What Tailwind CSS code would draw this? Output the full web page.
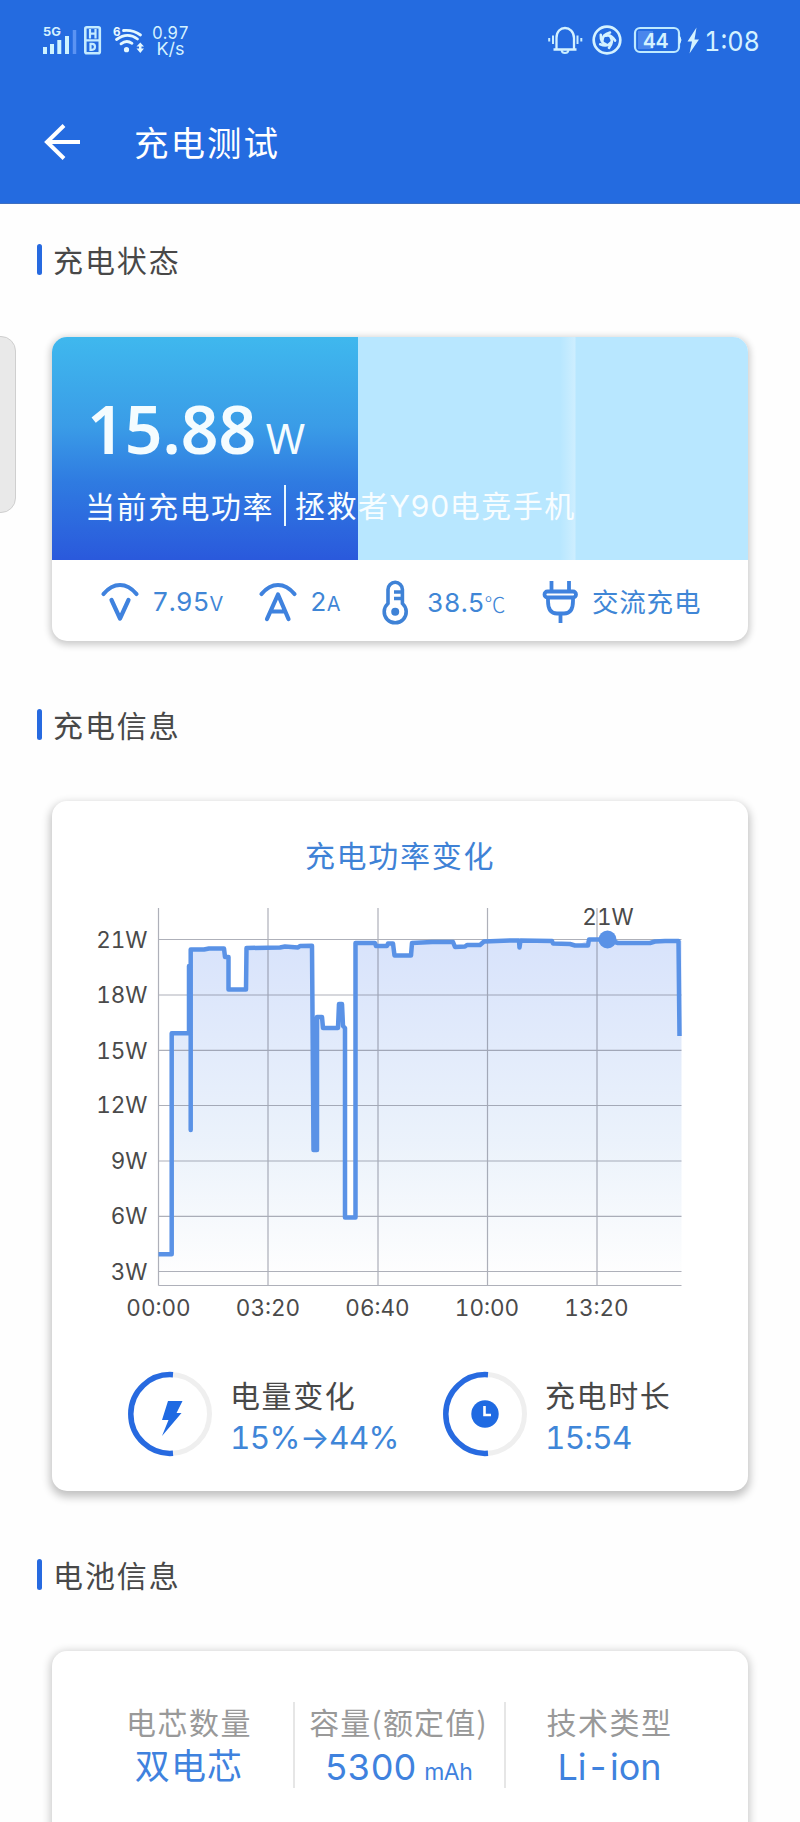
<!DOCTYPE html>
<html lang="zh-CN">
<head>
<meta charset="utf-8">
<title>充电测试</title>
<script src="https://cdn.jsdelivr.net/npm/@tailwindcss/browser@4"></script>
</head>
<body class="bg-white">
<div class="relative flex h-[1822px] w-[800px] flex-col overflow-hidden bg-[#fefefe] font-['Noto_Sans_CJK_SC',sans-serif] text-[#484848] tabular-nums">
  <header class="flex h-[204px] shrink-0 flex-col border-b border-[#3f6fc0] bg-[#246be0]">
    <!-- Status bar -->
    <div class="flex h-[80px] justify-between">
      <svg class="h-[80px] w-[240px]" viewBox="0 0 240 80" fill="none">
        <text x="43" y="36" font-family="Inter" font-weight="700" font-size="12" textLength="18" lengthAdjust="spacingAndGlyphs" fill="#d5f1ff">5G</text>
        <path d="M45 47V54M52 44V54M59.3 40V54M67 36V54" stroke="#cdf2ff" stroke-width="4"/>
        <path d="M74.5 30V54" stroke="#5b93f3" stroke-width="3.5"/>
        <rect x="85.3" y="27.3" width="14.5" height="26" rx="1.500" stroke="#c4ebff" stroke-width="2.600"/>
        <path d="M90 29V38.5M95.500 29V38.5M90 33.7H96M85 40.3H100" stroke="#c4ebff" stroke-width="2.200"/>
        <path d="M90.5 43.800V49.800H92Q95 49.800 95 46.8T92 43.800Z" stroke="#c4ebff" stroke-width="2.200"/>
        <text x="113" y="35.500" font-family="Inter" font-weight="700" font-size="12" textLength="7.500" lengthAdjust="spacingAndGlyphs" fill="#eafaff">6</text>
        <path d="M123.500 30.500Q133 29.500 140.500 35M116.500 39.500Q127.500 31.500 137.500 39M121 43.800Q126.500 39.500 132 43.300" stroke="#e4f8ff" stroke-width="2.8" stroke-linecap="round"/>
        <circle cx="126.5" cy="49.700" r="2.6" fill="#e4f8ff"/>
        <path d="M140.3 42.5L144 46.5H141.5V48.5H144L140.3 53L136.5 48.5H139V46.5H136.5Z" fill="#e4f8ff"/>
        <text x="152" y="38.500" font-family="Inter" font-size="17.500" textLength="37" lengthAdjust="spacingAndGlyphs" fill="#d5f2ff">0.97</text>
        <text x="156.500" y="55" font-family="Inter" font-size="17.500" textLength="28" lengthAdjust="spacingAndGlyphs" fill="#d5f2ff">K/s</text>
      </svg>
      <svg class="h-[80px] w-[260px]" viewBox="540 0 260 80" fill="none">
        <path d="M553.500 49.5H576.5M556.5 49V38C556.5 31.5 560.5 28 565 28S574 31.5 574 38V49" stroke="#d4f2ff" stroke-width="2.3"/>
        <path d="M561.5 50Q562 53 565 53T568.5 50M553 35.5V44M577.5 35.5V44M549.2 38V41.5M581.3 38V41.5" stroke="#c8edff" stroke-width="2"/>
        <circle cx="607" cy="40" r="13.3" stroke="#d4f2ff" stroke-width="2.7"/>
        <g stroke="#d4f2ff" stroke-width="2.600" stroke-linecap="round">
          <path d="M602.500 40Q602.500 34.500 610 32.500"/>
          <path d="M602.500 40Q602.500 34.500 610 32.500" transform="rotate(72 607 40)"/>
          <path d="M602.500 40Q602.500 34.500 610 32.500" transform="rotate(144 607 40)"/>
          <path d="M602.500 40Q602.500 34.500 610 32.500" transform="rotate(216 607 40)"/>
          <path d="M602.500 40Q602.500 34.500 610 32.500" transform="rotate(288 607 40)"/>
        </g>
        <rect x="638" y="31" width="15" height="18" fill="#4a86ec"/>
        <rect x="635" y="28" width="44" height="24" rx="5" stroke="#bfeaff" stroke-width="2.2"/>
        <path d="M679.500 36Q682.500 40 679.500 44Z" fill="#d4f2ff" stroke="#d4f2ff"/>
        <text x="643" y="47.500" font-family="Inter" font-weight="600" font-size="20" textLength="25.500" lengthAdjust="spacingAndGlyphs" fill="#d4f2ff">44</text>
        <path d="M696.500 27.500L687.500 41.500H692L689.500 53.500L699 39.500H694.500Z" fill="#d4f2ff"/>
        <text x="704" y="51" font-family="Inter" font-weight="400" font-size="27" textLength="56" lengthAdjust="spacingAndGlyphs" fill="#d4f2ff">1:08</text>
      </svg>
    </div>
    <!-- Title bar -->
    <div class="flex h-[124px] items-center pl-[44px]">
      <svg class="h-[36px] w-[36px]" viewBox="0 0 36 36" fill="none" stroke="#fff" stroke-width="4"><path d="M20 1.500L3 18L20 34.500M3 18H36"/></svg>
      <h1 class="mb-[2px] ml-[54px] text-[34.500px] leading-[36px] font-normal tracking-[2px] text-white">充电测试</h1>
    </div>
  </header>

  <div class="absolute top-[336px] left-[-20px] h-[177px] w-[36px] rounded-[15px] border border-[#cfcfcf] bg-[#e9e9e9]"></div>

  <div class="mt-[40px] ml-[37px] flex h-[31px] shrink-0 items-center">
    <div class="h-[31px] w-[5px] rounded-full bg-[#276ae0]"></div>
    <h2 class="ml-[11px] text-[30px] leading-[29px] tracking-[1.900px]">充电状态</h2>
  </div>

  <section class="mt-[62px] ml-[52px] flex h-[304px] w-[696px] shrink-0 flex-col overflow-hidden rounded-[15px] bg-white shadow-[0_2px_7px_2px_rgba(0,0,0,0.2)]">
    <div class="flex h-[223px] flex-col bg-[linear-gradient(to_bottom,#3fb8ee_0%,#3a9ce7_40%,#2f7be1_65%,#2a59dc_100%)] bg-[length:306px_223px] bg-no-repeat">
      <div class="flex h-full flex-col bg-[linear-gradient(to_right,transparent_306px,#b8e7ff_306px,#b8e7ff_508px,#cdeeff_523px,#b8e7ff_524px)]">
        <div class="flex h-[124px] items-baseline pt-[41px] pl-[35px] text-[#f4fcff]">
          <span class="font-['Noto_Sans'] text-[66px] leading-[100px] font-semibold">15.88</span>
          <span class="ml-[9px] font-['Inter'] text-[41px] leading-[50px] font-normal">W</span>
        </div>
        <div class="mt-[23px] flex h-[42px] items-center pl-[33px] text-[30px] leading-[38px] tracking-[1.500px] text-[#f8fdff]">
          <span>当前充电功率</span>
          <span class="mt-[1px] ml-[10px] h-[41px] w-[2px] bg-[#e8f7ff]"></span>
          <span class="ml-[9px]">拯救者<span class="font-['Inter'] tracking-[0.300px]">Y90</span>电竞手机</span>
        </div>
      </div>
    </div>
    <div class="flex h-[81px] items-center text-[27px] leading-[32px] text-[#3f86d6]">
      <svg class="ml-[48px] h-[44px] w-[40px]" viewBox="100 578 40 44" fill="none" stroke="#3f82de" stroke-width="4.200" stroke-linecap="round" stroke-linejoin="round"><path d="M103.500 593Q111 584 120 584T136.500 593M111.500 599L120 617.500L128.500 599"/></svg>
      <span class="mt-[4px] ml-[12px] w-[106px] font-['Inter'] text-[26px] font-normal">7.95<span class="text-[20px]">V</span></span>
      <svg class="h-[44px] w-[40px]" viewBox="258 578 40 44" fill="none" stroke="#3f82de" stroke-width="4.200" stroke-linecap="round" stroke-linejoin="round"><path d="M261.500 593Q269 584 278 584T294.500 593M267 618L278 593.500L288.500 618M271 610.500H285"/></svg>
      <span class="mt-[4px] ml-[12px] w-[70px] font-['Inter'] text-[26px] font-normal">2<span class="text-[20px]">A</span></span>
      <svg class="h-[44px] w-[30px] overflow-visible" viewBox="380 578 30 44" fill="none" stroke="#3f82d6" stroke-width="3.600"><path d="M388 602.500V588.500A7.200 7.200 0 0 1 402.400 588.500V602.500A11 11 0 1 1 388 602.500Z"/><path d="M394 591H402M394 597.500H402"/><circle cx="395.200" cy="610.800" r="4" fill="#3f82d6" stroke="none"/></svg>
      <span class="mt-[4px] ml-[17px] w-[115px] font-['Inter'] text-[26px] font-normal">38.5<span class="font-['Noto_Sans_CJK_SC'] text-[21px] font-light">℃</span></span>
      <svg class="h-[44px] w-[36px]" viewBox="543 578 36 44" fill="none" stroke="#3f82de" stroke-width="3.800"><path d="M552.500 580V590M570 580V590M561.500 613V622"/><rect x="545.500" y="590.500" width="31.500" height="6" rx="3"/><path d="M549 597V600Q549 612.500 558 612.500H565Q574 612.500 574 600V597"/></svg>
      <span class="ml-[14px] text-[26.500px] tracking-[0.800px]">交流充电</span>
    </div>
  </section>

  <div class="mt-[68px] ml-[37px] flex h-[31px] shrink-0 items-center">
    <div class="h-[31px] w-[5px] rounded-full bg-[#276ae0]"></div>
    <h2 class="ml-[11px] text-[30px] leading-[29px] tracking-[1.900px]">充电信息</h2>
  </div>

  <section class="mt-[61px] ml-[52px] flex h-[690px] w-[696px] shrink-0 flex-col rounded-[15px] bg-white shadow-[0_4px_9px_2px_rgba(0,0,0,0.24)]">
    <h3 class="mt-[35px] h-[37px] text-center text-[30px] leading-[36px] tracking-[1.700px] text-[#3f82d6]">充电功率变化</h3>
    <svg class="mt-[17px] h-[440px] w-[696px]" viewBox="52 890 696 440" fill="none" font-family="Inter">
      <defs>
        <linearGradient id="area" gradientUnits="userSpaceOnUse" x1="0" y1="940" x2="0" y2="1275">
          <stop offset="0" stop-color="#d8e3fb"/><stop offset="0.600" stop-color="#ebf2fb"/><stop offset="1" stop-color="#fefefe"/>
        </linearGradient>
      </defs>
      <path fill="url(#area)" d="M158.500 1254H171.700V1033.300H189V966L190.700 949.500L222 948.500L224.500 957L228 958L229.500 989.500H246L246.500 948L280 947.500L313 945.800L313.500 1150H317V1017L322 1018L323 1028H338L339 1004H342L345 1028V1217.500H355.500V943H375L376 946H387L388 943.500H393L394.500 955.500H411L412 943L453 942L455 947L480 945.500L484 941.500L515 940.500L552 941L553 944L575 946L589 940H607L618 943H650L665 941H681.500V1285H158.500Z"/>
      <path stroke="#6c7080" stroke-opacity="0.550" stroke-width="1.200" d="M158.500 939.500H681.500M158.500 995H681.500M158.500 1050.300H681.500M158.500 1105.500H681.500M158.500 1161H681.500M158.500 1216.300H681.500M158.500 1271.500H681.500M158.500 1285.500H681.500M158.500 908V1285.500M268 908V1285.500M378 908V1285.500M487.500 908V1285.500M597 908V1285.500"/>
      <path stroke="#5a92e6" stroke-width="4.500" stroke-linejoin="round" d="M158.500 1254.300H171.700V1033.300H189V966H190.700V1130V949.500L204 949.500L209 948.500H224L225 957H228.500V989.500H246L246.500 948L280 947.500L285 946.500L298 947.500L300 946L312 945.800L313.500 1150H317V1017H322L323 1028H338L339 1004H342L343 1026L345 1028V1217.500H355.500V943H375L376 946H387L388 943.500H393L394.500 955.500H411L412 943L432 942H453L455 947L465 946.500L467 945H480L484 941.500L510 940.500H519L519.500 947.500L520.500 940.500L552 941L553 943.500L570 944L575 945.500H588L589 939.500H607L618 943H650L655 941.500L665 941H678.500L679.500 1036"/>
      <circle cx="607.500" cy="939.500" r="9" fill="#5a92e6"/>
      <g fill="#4a4a4a" font-size="22.500" text-anchor="end">
        <text x="147.500" y="947.500">21W</text><text x="147.500" y="1003">18W</text><text x="147.500" y="1058.500">15W</text><text x="147.500" y="1113">12W</text><text x="147.500" y="1169">9W</text><text x="147.500" y="1224">6W</text><text x="147.500" y="1279.500">3W</text>
      </g>
      <g fill="#4a4a4a" font-size="22.500" text-anchor="middle">
        <text x="158.500" y="1315.500">00:00</text><text x="268" y="1315.500">03:20</text><text x="377.500" y="1315.500">06:40</text><text x="487" y="1315.500">10:00</text><text x="596.500" y="1315.500">13:20</text><text x="608" y="925">21W</text>
      </g>
    </svg>
    <div class="mt-[41px] flex items-center">
      <svg class="ml-[75px] h-[86px] w-[86px]" viewBox="-43 -43 86 86" fill="none">
        <circle r="39.500" stroke="#efefef" stroke-width="5"/>
        <path d="M3 -39.300A39.400 39.400 0 1 0 3 39.300" stroke="#276ae0" stroke-width="5.500"/>
        <path d="M-2 -13H12.500L6.500 -1H11.500L-8 22L-1.500 6H-8Z" fill="#1f6ae2"/>
      </svg>
      <div class="ml-[17px] w-[212px] pt-[3px]">
        <div class="text-[30px] leading-[38px] tracking-[1.600px]">电量变化</div>
        <div class="mt-[4px] -mb-[2px] font-['Inter'] text-[31.500px] leading-[42px] font-normal tracking-[-0.700px] text-[#3f86d8]">15%→44%</div>
      </div>
      <svg class="h-[86px] w-[86px]" viewBox="-43 -43 86 86" fill="none">
        <circle r="39.500" stroke="#efefef" stroke-width="5"/>
        <path d="M3 -39.300A39.400 39.400 0 1 0 3 39.300" stroke="#276ae0" stroke-width="5.500"/>
        <circle r="13.700" fill="#1f6ae2"/>
        <path d="M-0.500 -8V1H6" stroke="#fff" stroke-width="2.600"/>
      </svg>
      <div class="ml-[17px] pt-[3px]">
        <div class="text-[30px] leading-[38px] tracking-[1.600px]">充电时长</div>
        <div class="mt-[4px] -mb-[2px] font-['Inter'] text-[31.500px] leading-[42px] font-normal tracking-[-0.700px] text-[#3f86d8]">15:54</div>
      </div>
    </div>
  </section>

  <div class="mt-[68px] ml-[37px] flex h-[31px] shrink-0 items-center">
    <div class="h-[31px] w-[5px] rounded-full bg-[#276ae0]"></div>
    <h2 class="ml-[11px] text-[30px] leading-[29px] tracking-[1.900px]">电池信息</h2>
  </div>

  <section class="mt-[61px] ml-[52px] flex h-[260px] w-[696px] shrink-0 rounded-[15px] bg-white pt-[51px] pl-[33px] shadow-[0_2px_8px_2px_rgba(0,0,0,0.2)]">
    <div class="flex h-[86px] w-[210px] flex-col items-center border-r-2 border-[#e6e6e6]">
      <div class="text-[30px] leading-[39px] tracking-[1.500px] text-[#999]">电芯数量</div>
      <div class="text-[35px] leading-[46px] tracking-[1.200px] text-[#3f82de]">双电芯</div>
    </div>
    <div class="flex h-[86px] w-[211px] flex-col items-center border-r-2 border-[#e6e6e6] pr-[2px]">
      <div class="text-[30px] leading-[39px] tracking-[1.200px] text-[#999]">容量(额定值)</div>
      <div class="mt-[4px] font-['Inter'] text-[36px] leading-[44px] font-normal tracking-[-0.500px] text-[#3f82de]">5300<span class="ml-[8px] text-[23px]">mAh</span></div>
    </div>
    <div class="flex h-[86px] w-[207px] flex-col items-center">
      <div class="text-[30px] leading-[39px] tracking-[1.500px] text-[#999]">技术类型</div>
      <div class="mt-[4px] font-['Inter'] text-[36px] leading-[44px] font-normal text-[#3f82de]">Li-ion</div>
    </div>
  </section>
</div>
</body>
</html>
